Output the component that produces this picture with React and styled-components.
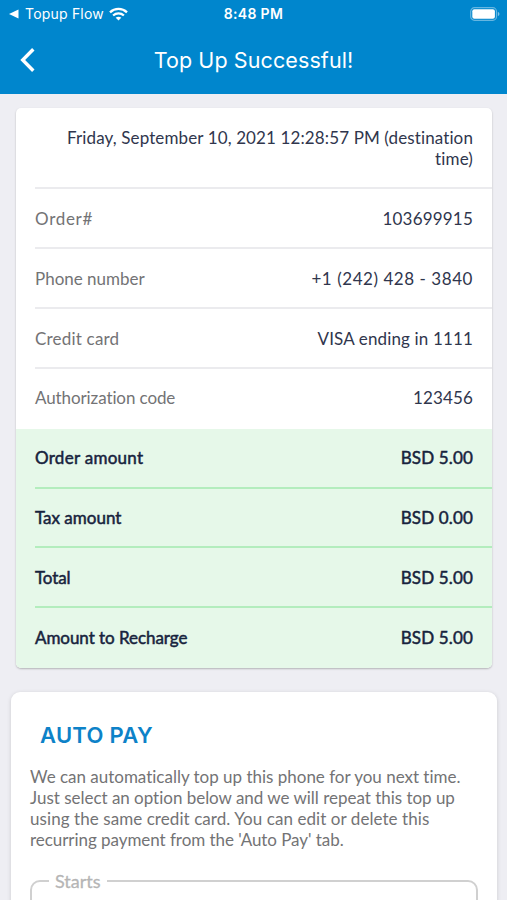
import React from 'react'
import styled, { createGlobalStyle } from 'styled-components'

const details = [
  { label: 'Order#', value: '103699915', labelSpacing: 0.7, valueSpacing: 0.2 },
  { label: 'Phone number', value: '+1 (242) 428 - 3840', labelSpacing: 0, valueSpacing: 0.55 },
  { label: 'Credit card', value: 'VISA ending in 1111', labelSpacing: 0.2, valueSpacing: 0.15 },
  { label: 'Authorization code', value: '123456', labelSpacing: -0.1, valueSpacing: 0.15 }
]

const amounts = [
  { label: 'Order amount', value: 'BSD 5.00', labelSpacing: 0.28 },
  { label: 'Tax amount', value: 'BSD 0.00', labelSpacing: 0 },
  { label: 'Total', value: 'BSD 5.00', labelSpacing: -0.1 },
  { label: 'Amount to Recharge', value: 'BSD 5.00', labelSpacing: -0.05 }
]

const WifiIcon = () => (
  <svg width='19' height='14' viewBox='0 0 19 14' fill='none' stroke='#fff' strokeWidth='2.3'>
    <path d='M1 5.3C5.8.7 13.2.7 18 5.3' />
    <path d='M4.1 8.5c3.1-2.9 7.7-2.9 10.8 0' />
    <path d='M6.7 10.7c1.6-1.4 4-1.4 5.6 0L9.5 13.5z' fill='#fff' stroke='none' />
  </svg>
)

const BatteryIcon = () => (
  <svg width='30' height='14' viewBox='0 0 30 14' fill='none'>
    <rect x='.7' y='.7' width='25.8' height='12.6' rx='3.8' stroke='#fff' strokeOpacity='.4' strokeWidth='1.2' />
    <rect x='2.3' y='2.3' width='22.6' height='9.4' rx='2' fill='#fff' />
    <path d='M27.9 5v4c1-.4 1.5-1.1 1.5-2s-.5-1.6-1.5-2z' fill='#fff' fillOpacity='.5' />
  </svg>
)

const App = () => {
  return (
    <Screen>
      <GlobalStyle />
      <Header>
        <StatusBar>
          <BackToApp>
            <svg width='10' height='10' viewBox='0 0 10 10'>
              <path d='M0 5l9.5-4.4v8.8z' fill='#fff' />
            </svg>
            <AppName>Topup Flow</AppName>
            <WifiIcon />
          </BackToApp>
          <Clock>8:48 PM</Clock>
          <BatteryIcon />
        </StatusBar>
        <NavBar>
          <BackButton aria-label='Back'>
            <svg width='16' height='24' viewBox='0 0 16 24' fill='none' stroke='#fff' strokeWidth='3.4'>
              <path d='M13.3 1.2L2.7 12l10.6 10.8' />
            </svg>
          </BackButton>
          <Title>Top Up Successful!</Title>
        </NavBar>
      </Header>

      <Receipt>
        <DateRow>
          <Value $spacing={0.12}>
            Friday, September 10, 2021 12:28:57 PM (destination
            <br />
            time)
          </Value>
        </DateRow>
        {details.map(item => (
          <Row key={item.label}>
            <Label $spacing={item.labelSpacing}>{item.label}</Label>
            <Value $spacing={item.valueSpacing}>{item.value}</Value>
          </Row>
        ))}
        <Amounts>
          {amounts.map(item => (
            <AmountRow key={item.label}>
              <Amount $spacing={item.labelSpacing}>{item.label}</Amount>
              <Amount $spacing={0.15}>{item.value}</Amount>
            </AmountRow>
          ))}
        </Amounts>
      </Receipt>

      <AutoPay>
        <AutoPayTitle>AUTO PAY</AutoPayTitle>
        <Description>
          <Line $spacing={-0.01}>We can automatically top up this phone for you next time.</Line>
          <Line $spacing={-0.02}>Just select an option below and we will repeat this top up</Line>
          <Line $spacing={0.07}>using the same credit card. You can edit or delete this</Line>
          <Line $spacing={-0.05}>recurring payment from the 'Auto Pay' tab.</Line>
        </Description>
        <StartsField>
          <Legend>Starts</Legend>
        </StartsField>
      </AutoPay>
    </Screen>
  )
}

export default App

//styling

const GlobalStyle = createGlobalStyle`
  * {
    box-sizing: border-box;
  }
  body {
    margin: 0;
    background-color: #eeeef3;
  }
`

const Screen = styled.div`
  width: 100%;
  height: 900px;
  overflow: hidden;
  background-color: #eeeef3;
  font-family: Lato, sans-serif;
  font-variant-ligatures: none;
`

const Header = styled.header`
  height: 94px;
  background-color: #0086cd;
  color: #fff;
  font-family: Inter, sans-serif;
`

const StatusBar = styled.div`
  display: grid;
  grid-template-columns: 1fr auto 1fr;
  align-items: center;
  height: 27px;
  padding: 0 7px 0 9px;

  > svg {
    justify-self: end;
  }
`

const BackToApp = styled.div`
  display: flex;
  align-items: center;
`

const AppName = styled.span`
  margin: 0 5px 0 6px;
  font-size: 14px;
  letter-spacing: 0.2px;
`

const Clock = styled.span`
  margin-right: 2px;
  font-size: 14px;
  font-weight: 600;
  letter-spacing: 0.3px;
`

const NavBar = styled.div`
  display: grid;
  grid-template-columns: 60px 1fr 60px;
  align-items: center;
  height: 65px;
`

const BackButton = styled.button`
  display: flex;
  padding: 0 0 0 20px;
  border: none;
  background: none;
`

const Title = styled.h1`
  margin: 0;
  text-align: center;
  font-size: 21.5px;
  font-weight: 400;
  letter-spacing: 0.1px;
`

const Receipt = styled.section`
  margin: 14.4px 15px 0 16px;
  overflow: hidden;
  border-radius: 5px;
  background-color: #fff;
  box-shadow: 0 1px 2px rgba(0, 0, 0, 0.25);
`

const Row = styled.div`
  display: flex;
  align-items: center;
  justify-content: space-between;
  height: 59.85px;
  margin-left: 19px;
  padding-right: 19px;
  border-bottom: 2px solid #ebebee;
  font-size: 17px;

  &:nth-child(5) {
    border-bottom-color: transparent;
  }
`

const DateRow = styled(Row)`
  justify-content: flex-end;
  height: 81px;
`

const Label = styled.span`
  color: #737375;
  letter-spacing: ${props => props.$spacing}px;
`

const Value = styled.span`
  color: #30364d;
  text-align: right;
  line-height: 21px;
  letter-spacing: ${props => props.$spacing}px;
`

const Amounts = styled.div`
  background-color: #e6f8e9;
`

const AmountRow = styled(Row)`
  border-bottom-color: #b3edbd;
  color: #17233d;

  &:last-child {
    border-bottom-color: transparent;
  }
`

const Amount = styled.span`
  letter-spacing: ${props => props.$spacing}px;
  -webkit-text-stroke: 0.5px #17233d;
`

const AutoPay = styled.section`
  height: 300px;
  margin: 24px 10px 0 11px;
  padding: 30px 19px 0;
  border-radius: 9px;
  background-color: #fff;
  box-shadow: 0 1px 4px rgba(0, 0, 0, 0.15);
`

const AutoPayTitle = styled.h2`
  margin: 0 0 0 10px;
  color: #0d82c8;
  font-family: Inter, sans-serif;
  font-size: 22px;
  font-weight: 600;
  line-height: 26px;
  letter-spacing: 0.3px;
`

const Description = styled.p`
  margin: 19px 0 0;
  color: #737375;
  font-size: 17px;
  line-height: 20.8px;
`

const Line = styled.span`
  display: block;
  white-space: nowrap;
  letter-spacing: ${props => props.$spacing}px;
`

const StartsField = styled.fieldset`
  height: 80px;
  margin: 19.5px 0 0;
  padding: 0 17px;
  border: 2px solid #d0d0d0;
  border-radius: 10px;
`

const Legend = styled.legend`
  padding: 0 6px;
  color: #b5b5b5;
  font-size: 18px;
  line-height: 22px;
  -webkit-text-stroke: 0.3px #b5b5b5;
`
